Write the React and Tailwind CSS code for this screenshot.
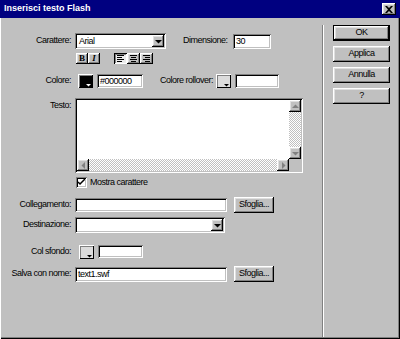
import React from 'react';

const sunken =
  'bg-white shadow-[inset_1px_1px_0_#808080,inset_-1px_-1px_0_#ffffff,inset_2px_2px_0_#000000,inset_-2px_-2px_0_#c0c0c0]';
const raised =
  'bg-[#c0c0c0] shadow-[inset_-1px_-1px_0_#000000,inset_1px_1px_0_#ffffff,inset_-2px_-2px_0_#808080,inset_2px_2px_0_#dfdfdf]';

function Label({ children, className = '' }) {
  return <span className={`w-[71px] shrink-0 text-right ${className}`}>{children}</span>;
}

function Arrow({ dir = 'down', color = '#000000', size = 7 }) {
  const pts = {
    down: '0,2 7,2 3.5,5.5',
    up: '0,5 7,5 3.5,1.5',
    left: '5,0 5,7 1.5,3.5',
    right: '2,0 2,7 5.5,3.5',
  };
  return (
    <svg width={size} height={size} viewBox="0 0 7 7">
      <polygon points={pts[dir]} fill={color} />
    </svg>
  );
}

function Select({ value, className }) {
  return (
    <div className={`${sunken} ${className} flex items-stretch p-[2px]`}>
      <span className="flex-1 pl-[2px] leading-[12px]">{value}</span>
      <div className={`${raised} w-[12px] flex items-center justify-center`}>
        <Arrow />
      </div>
    </div>
  );
}

function Input({ value = '', className }) {
  return (
    <div className={`${sunken} ${className} flex items-center pl-[3px]`}>
      <span className="leading-none">{value}</span>
    </div>
  );
}

function Swatch({ color, arrow, className = '' }) {
  return (
    <div
      className={`${className} relative w-[15px] h-[14px] p-[1px] shadow-[inset_1px_1px_0_#ffffff,inset_-1px_-1px_0_#000000]`}
      style={{ background: '#c0c0c0' }}
    >
      <div className="w-full h-full border-t border-l border-[#808080]" style={{ background: color }} />
      <div className="absolute right-[2px] bottom-[1px] leading-none">
        <svg width="5" height="4" viewBox="0 0 5 4">
          <polygon points="0,1 5,1 2.5,3.5" fill={arrow} />
        </svg>
      </div>
    </div>
  );
}

function Button({ children, className = '' }) {
  return (
    <div className={`${raised} ${className} flex items-center justify-center`}>{children}</div>
  );
}

function AlignIcon({ kind }) {
  const lines = [0, 1, 2, 3].map((i) => {
    const w = i % 2 ? 5 : 7;
    let x = 0;
    if (kind === 'center') x = (7 - w) / 2;
    if (kind === 'right') x = 7 - w;
    return { x, w, y: i * 2 };
  });
  return (
    <svg width="7" height="7" viewBox="0 0 7 7" shapeRendering="crispEdges">
      {lines.map((l, i) => (
        <rect key={i} x={Math.floor(l.x)} y={l.y} width={l.w} height="1" fill="#000" />
      ))}
    </svg>
  );
}

function ScrollBtn({ dir }) {
  return (
    <div className={`${raised} w-[12px] h-[12px] flex items-center justify-center shrink-0`}>
      <Arrow dir={dir} color="#808080" />
    </div>
  );
}

const track = 'bg-[repeating-conic-gradient(#c0c0c0_0_25%,#ffffff_0_50%)] bg-[length:2px_2px]';

export default function App() {
  return (
    <div
      className="w-[400px] h-[339px] bg-[#c0c0c0] flex flex-col text-black text-[9px] tracking-[-0.5px] overflow-hidden"
      style={{ fontFamily: '"Liberation Sans", Arial, sans-serif' }}
    >
      {/* Title bar */}
      <div className="h-[18px] shrink-0 bg-[#000080] flex items-center justify-between pl-[4px] pr-[4px]">
        <span className="text-white font-bold tracking-normal text-[9px]">Inserisci testo Flash</span>
        <Button className="w-[14px] h-[12px]">
          <svg width="8" height="7" viewBox="0 0 8 7">
            <path d="M0 0h2l2 2l2-2h2l-3 3.5l3 3.5h-2l-2-2l-2 2h-2l3-3.5z" fill="#000" />
          </svg>
        </Button>
      </div>

      {/* Body */}
      <div className="flex-1 flex shadow-[inset_1px_0_0_#ffffff,inset_-1px_-1px_0_#000000,inset_-2px_-2px_0_#808080]">
        {/* Left panel */}
        <div className="w-[322px] shrink-0 flex flex-col">
          <div className="mt-[15px] h-[16px] flex items-center">
            <Label>Carattere:</Label>
            <Select value="Arial" className="ml-[4px] w-[91px] h-[16px]" />
            <span className="ml-[17px] w-[50px]">Dimensione:</span>
            <Input value="30" className="w-[38px] h-[15px]" />
          </div>

          <div className="mt-[4px] h-[11px] flex items-center pl-[76px]">
            <Button className="w-[12px] h-[11px]">
              <span className="font-bold text-[9px] tracking-normal" style={{ fontFamily: '"Liberation Serif", serif' }}>B</span>
            </Button>
            <Button className="w-[12px] h-[11px]">
              <span className="font-bold italic text-[9px] tracking-normal" style={{ fontFamily: '"Liberation Serif", serif' }}>I</span>
            </Button>
            <div className="ml-[14px] w-[13px] h-[11px] flex items-center justify-center bg-[#ececec] shadow-[inset_1px_1px_0_#000000,inset_-1px_-1px_0_#ffffff,inset_2px_2px_0_#808080]">
              <AlignIcon kind="left" />
            </div>
            <Button className="w-[13px] h-[11px]">
              <AlignIcon kind="center" />
            </Button>
            <Button className="w-[13px] h-[11px]">
              <AlignIcon kind="right" />
            </Button>
          </div>

          <div className="mt-[10px] h-[14px] flex items-center">
            <Label>Colore:</Label>
            <Swatch color="#000000" arrow="#ffffff" className="ml-[7px]" />
            <Input value="#000000" className="ml-[4px] w-[46px] h-[14px]" />
            <span className="ml-[17px] w-[56px]">Colore rollover:</span>
            <Swatch color="#dcdcdc" arrow="#000000" />
            <Input className="ml-[4px] w-[44px] h-[14px]" />
          </div>

          <div className="mt-[10px] h-[75px] flex items-start">
            <Label className="pt-[1px]">Testo:</Label>
            <div className={`${sunken} ml-[4px] w-[228px] h-[75px] p-[2px] flex flex-col`}>
              <div className="flex-1 flex">
                <div className="flex-1 bg-white" />
                <div className="w-[12px] flex flex-col">
                  <ScrollBtn dir="up" />
                  <div className={`flex-1 ${track}`} />
                  <ScrollBtn dir="down" />
                </div>
              </div>
              <div className="h-[12px] flex">
                <ScrollBtn dir="left" />
                <div className={`flex-1 ${track}`} />
                <ScrollBtn dir="right" />
                <div className="w-[12px] bg-[#c0c0c0]" />
              </div>
            </div>
          </div>

          <div className="mt-[4px] h-[11px] flex items-center pl-[76px]">
            <div className={`${sunken} w-[11px] h-[11px] flex items-center justify-center`}>
              <svg width="7" height="7" viewBox="0 0 7 7">
                <path d="M0 3l2 2l5-5" stroke="#000" strokeWidth="1.5" fill="none" />
              </svg>
            </div>
            <span className="ml-[3px]">Mostra carattere</span>
          </div>

          <div className="mt-[9px] h-[16px] flex items-center">
            <Label>Collegamento:</Label>
            <Input className="ml-[4px] w-[152px] h-[14px]" />
            <Button className="ml-[7px] w-[40px] h-[16px]">Sfoglia...</Button>
          </div>

          <div className="mt-[4px] h-[16px] flex items-center">
            <Label>Destinazione:</Label>
            <Select value="" className="ml-[4px] w-[150px] h-[16px]" />
          </div>

          <div className="mt-[11px] h-[15px] flex items-center">
            <Label>Col sfondo:</Label>
            <Swatch color="#dcdcdc" arrow="#000000" className="ml-[8px]" />
            <Input className="ml-[4px] w-[45px] h-[13px]" />
          </div>

          <div className="mt-[7px] h-[16px] flex items-center">
            <Label>Salva con nome:</Label>
            <Input value="text1.swf" className="ml-[4px] w-[152px] h-[15px]" />
            <Button className="ml-[7px] w-[40px] h-[16px]">Sfoglia...</Button>
          </div>
        </div>

        {/* Separator */}
        <div className="mt-[7px] mb-[2px] w-[2px] border-l border-l-[#808080] border-r border-r-white" />

        {/* Right panel */}
        <div className="flex flex-col pl-[9px] pt-[7px] gap-[5px]">
          <div className="w-[57px] h-[16px] border border-black">
            <Button className="w-full h-full">OK</Button>
          </div>
          <Button className="w-[57px] h-[16px]">Applica</Button>
          <Button className="w-[57px] h-[16px]">Annulla</Button>
          <Button className="w-[57px] h-[16px]">?</Button>
        </div>
      </div>
    </div>
  );
}
